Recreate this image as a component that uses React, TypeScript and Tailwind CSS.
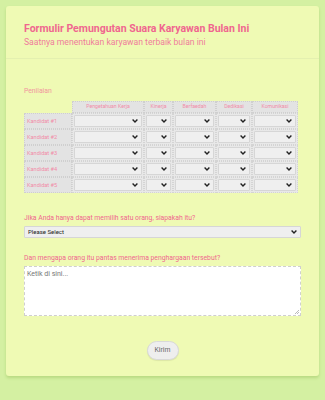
const criteria = [
  { label: "Pengetahuan Kerja", w: "w-[72px]" },
  { label: "Kinerja", w: "w-[29px]" },
  { label: "Berfaedah", w: "w-[43px]" },
  { label: "Dedikasi", w: "w-[36px]" },
  { label: "Komunikasi", w: "w-[46px]" },
];

const candidates = ["Kandidat #1", "Kandidat #2", "Kandidat #3", "Kandidat #4", "Kandidat #5"];

function Chevron() {
  return (
    <svg width="6" height="4" viewBox="0 0 6 4" className="shrink-0">
      <path d="M0.6 0.6 L3 3 L5.4 0.6" fill="none" stroke="#222" strokeWidth="1.4" />
    </svg>
  );
}

function FakeSelect({ text }: { text?: string }) {
  return (
    <div className="flex h-[12px] items-center justify-between rounded-[1px] border border-[#d6d6d6] bg-[#efefef] px-[3px]">
      <span className="text-[6px] leading-none text-[#222]">{text}</span>
      <Chevron />
    </div>
  );
}

export default function App() {
  return (
    <div
      className="min-h-[400px] bg-[#d4f0a2] p-[6px]"
      style={{ fontFamily: "Roboto, 'Liberation Sans', sans-serif" }}
    >
      <div className="h-[370px] rounded-[3px] bg-[#effab4] shadow-[0_2px_3px_rgba(150,190,90,0.45)]">
        {/* header */}
        <div className="border-b border-[#e4f0b0] px-[18px] pt-[16px] pb-[10px]">
          <h1 className="text-[10.5px] leading-[14px] font-bold text-[#f0668f]">
            Formulir Pemungutan Suara Karyawan Bulan Ini
          </h1>
          <p className="text-[8.6px] leading-[12px] text-[#f07c9c]">
            Saatnya menentukan karyawan terbaik bulan ini
          </p>
        </div>

        <div className="px-[18px] pt-[28px]">
          <div className="text-[6.8px] leading-[8px] text-[#f2959f]">Penilaian</div>

          {/* rating table */}
          <div className="mt-[6px] flex flex-col">
            <div className="flex">
              <div className="w-[48px]" />
              {criteria.map((c) => (
                <div
                  key={c.label}
                  className={`${c.w} flex h-[12px] items-center justify-center border border-dotted border-[#cfcfcf] bg-[#e3e3e3] text-[5.2px] text-[#f28ba8]`}
                >
                  {c.label}
                </div>
              ))}
            </div>
            {candidates.map((k) => (
              <div key={k} className="flex">
                <div className="flex h-[16px] w-[48px] items-center border border-dotted border-[#cfcfcf] bg-[#e3e3e3] pl-[2px] text-[5.6px] text-[#f28ba8]">
                  {k}
                </div>
                {criteria.map((c) => (
                  <div
                    key={c.label}
                    className={`${c.w} flex h-[16px] flex-col justify-center border border-dotted border-[#d4d4d4] bg-[#e8e8e8] px-[1px]`}
                  >
                    <FakeSelect />
                  </div>
                ))}
              </div>
            ))}
          </div>

          <div className="mt-[21px] text-[6.8px] leading-[8px] text-[#f0668f]">
            Jika Anda hanya dapat memilih satu orang, siapakah itu?
          </div>
          <div className="mt-[4px]">
            <FakeSelect text="Please Select" />
          </div>

          <div className="mt-[16px] text-[6.8px] leading-[8px] text-[#f0668f]">
            Dan mengapa orang itu pantas menerima penghargaan tersebut?
          </div>
          <div className="relative mt-[4px] h-[50px] border border-dashed border-[#cfcfcf] bg-white px-[2px] pt-[2px] text-[7px] text-[#777]">
            Ketik di sini...
            <svg width="5" height="5" viewBox="0 0 5 5" className="absolute right-[1px] bottom-[1px]">
              <path d="M5 1 L1 5 M5 3 L3 5" stroke="#aaa" strokeWidth="0.8" />
            </svg>
          </div>

          <div className="mt-[25px] flex justify-center">
            <button className="h-[19px] w-[32px] rounded-full border border-[#d9d9d9] bg-[#eeeeee] text-[6.8px] text-[#666] shadow-[0_1px_1px_rgba(0,0,0,0.08)]">
              Kirim
            </button>
          </div>
        </div>
      </div>
    </div>
  );
}
